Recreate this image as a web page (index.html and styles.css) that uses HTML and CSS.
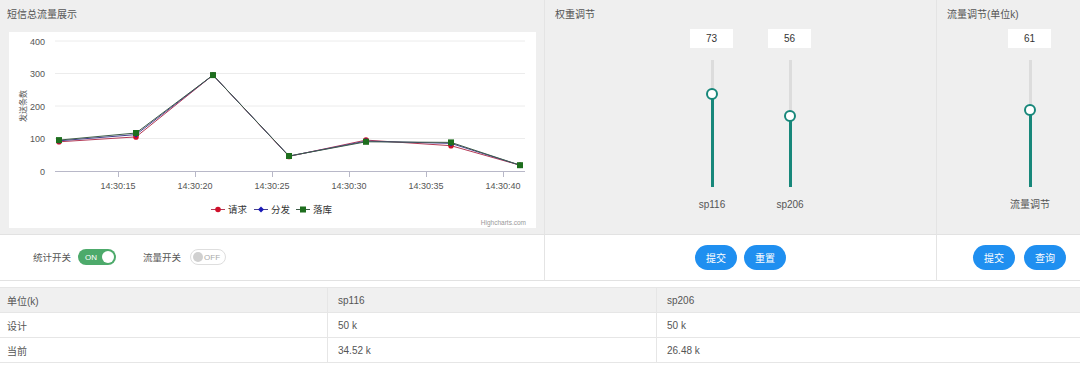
FILE: index.html
```html
<!DOCTYPE html>
<html lang="zh-CN">
<head>
  <meta charset="UTF-8" />
  <title>流量监控</title>
  <link rel="stylesheet" href="styles.css">
</head>
<body>
  <div class="dashboard">
    <!-- 总流量图表 -->
    <div class="panel">
      <div class="panel-title">短信总流量展示</div>
      <div class="chart-box">
        <svg width="527" height="196" viewBox="0 0 527 196">
          <g class="grid">
            <line x1="46" y1="9" x2="516" y2="9" />
            <line x1="46" y1="41.5" x2="516" y2="41.5" />
            <line x1="46" y1="74" x2="516" y2="74" />
            <line x1="46" y1="106.5" x2="516" y2="106.5" />
          </g>
          <line class="axis" x1="46" y1="139.5" x2="516" y2="139.5" />
          <g class="axis">
            <line x1="109.5" y1="139" x2="109.5" y2="145" />
            <line x1="186.5" y1="139" x2="186.5" y2="145" />
            <line x1="263.5" y1="139" x2="263.5" y2="145" />
            <line x1="340.5" y1="139" x2="340.5" y2="145" />
            <line x1="417.5" y1="139" x2="417.5" y2="145" />
            <line x1="494.5" y1="139" x2="494.5" y2="145" />
          </g>
          <g class="ylabels">
            <text x="36" y="13">400</text>
            <text x="36" y="45">300</text>
            <text x="36" y="78">200</text>
            <text x="36" y="110">100</text>
            <text x="36" y="143">0</text>
          </g>
          <g class="xlabels">
            <text x="109" y="157">14:30:15</text>
            <text x="186" y="157">14:30:20</text>
            <text x="263" y="157">14:30:25</text>
            <text x="340" y="157">14:30:30</text>
            <text x="417" y="157">14:30:35</text>
            <text x="494" y="157">14:30:40</text>
          </g>
          <text class="ytitle" transform="translate(17 74) rotate(-90)">发送条数</text>

          <!-- 请求 -->
          <polyline class="s-red" points="50,109.8 127,104.9 204,43.1 280,124.4 357,108.1 442,113.7 511,133.2" />
          <g class="m-red">
            <circle cx="50" cy="109.8" r="2.8" /><circle cx="127" cy="104.9" r="2.8" />
            <circle cx="204" cy="43.1" r="2.8" /><circle cx="280" cy="124.4" r="2.8" />
            <circle cx="357" cy="108.1" r="2.8" /><circle cx="442" cy="113.7" r="2.8" />
            <circle cx="511" cy="133.2" r="2.8" />
          </g>
          <!-- 分发 -->
          <polyline class="s-blue" points="50,108.8 127,102.6 204,43.1 280,124.1 357,109.1 442,111.4 511,133.2" />
          <g class="m-blue">
            <path d="M50 105.8l3 3-3 3-3-3z" /><path d="M127 99.6l3 3-3 3-3-3z" />
            <path d="M204 40.1l3 3-3 3-3-3z" /><path d="M280 121.1l3 3-3 3-3-3z" />
            <path d="M357 106.1l3 3-3 3-3-3z" /><path d="M442 108.4l3 3-3 3-3-3z" />
            <path d="M511 130.2l3 3-3 3-3-3z" />
          </g>
          <!-- 落库 -->
          <polyline class="s-green" points="50,108.1 127,101 204,43.1 280,124 357,109.8 442,110.4 511,133.2" />
          <g class="m-green">
            <rect x="47" y="105.1" width="6" height="6" /><rect x="124" y="98" width="6" height="6" />
            <rect x="201" y="40.1" width="6" height="6" /><rect x="277" y="121" width="6" height="6" />
            <rect x="354" y="106.8" width="6" height="6" /><rect x="439" y="107.4" width="6" height="6" />
            <rect x="508" y="130.2" width="6" height="6" />
          </g>

          <!-- 图例 -->
          <g class="legend">
            <line class="s-red" x1="202" y1="177.5" x2="216" y2="177.5" />
            <circle class="m-red" cx="209" cy="177.5" r="2.8" />
            <text x="219" y="181">请求</text>
            <line class="s-blue" x1="245" y1="177.5" x2="259" y2="177.5" />
            <path class="m-blue" d="M252 174.5l3 3-3 3-3-3z" />
            <text x="262" y="181">分发</text>
            <line class="s-green" x1="287" y1="177.5" x2="301" y2="177.5" />
            <rect class="m-green" x="291" y="174.5" width="6" height="6" />
            <text x="304" y="181">落库</text>
          </g>
          <text class="credit" x="517" y="193">Highcharts.com</text>
        </svg>
      </div>
    </div>

    <!-- 权重调节 -->
    <div class="panel bordered">
      <div class="panel-title">权重调节</div>
      <div class="sliders weight">
        <div class="slider">
          <div class="value">73</div>
          <div class="track">
            <div class="fill" style="height: 73%"></div>
            <div class="knob" style="bottom: 73%"></div>
          </div>
          <div class="slider-label">sp116</div>
        </div>
        <div class="slider">
          <div class="value">56</div>
          <div class="track">
            <div class="fill" style="height: 56%"></div>
            <div class="knob" style="bottom: 56%"></div>
          </div>
          <div class="slider-label">sp206</div>
        </div>
      </div>
    </div>

    <!-- 流量调节 -->
    <div class="panel bordered">
      <div class="panel-title">流量调节(单位k)</div>
      <div class="sliders flow">
        <div class="slider">
          <div class="value">61</div>
          <div class="track">
            <div class="fill" style="height: 61%"></div>
            <div class="knob" style="bottom: 61%"></div>
          </div>
          <div class="slider-label">流量调节</div>
        </div>
      </div>
    </div>

    <!-- 操作栏 -->
    <div class="foot switches">
      <span class="switch-label">统计开关</span>
      <span class="switch on"><span class="switch-text">ON</span><span class="switch-dot"></span></span>
      <span class="switch-label second">流量开关</span>
      <span class="switch off"><span class="switch-dot"></span><span class="switch-text">OFF</span></span>
    </div>
    <div class="foot bordered center">
      <button class="btn">提交</button>
      <button class="btn">重置</button>
    </div>
    <div class="foot bordered right">
      <button class="btn">提交</button>
      <button class="btn">查询</button>
    </div>
  </div>

  <table class="stats">
    <tr>
      <th class="c1">单位(k)</th>
      <th class="c2">sp116</th>
      <th>sp206</th>
    </tr>
    <tr>
      <td>设计</td>
      <td>50 k</td>
      <td>50 k</td>
    </tr>
    <tr>
      <td>当前</td>
      <td>34.52 k</td>
      <td>26.48 k</td>
    </tr>
  </table>
</body>
</html>
```

FILE: styles.css
```css
body {
  margin: 0;
  font-family: 'Liberation Sans', 'Noto Sans CJK SC', sans-serif;
  font-size: 10px;
  color: #555;
  background-color: #fff;
}
.dashboard {
  display: grid;
  grid-template-columns: 544px 392px 1fr;
  grid-template-rows: 235px 46px;
}
.bordered {
  border-left: 1px solid #e4e4e4;
}
.panel {
  background-color: #efefef;
  border-bottom: 1px solid #e2e2e2;
  padding-top: 8px;
  box-sizing: border-box;
}
.panel-title {
  line-height: 14px;
  padding-left: 7px;
  color: #555;
}
.panel.bordered .panel-title {
  padding-left: 10px;
}
.chart-box {
  width: 527px;
  height: 196px;
  margin: 10px 0 0 9px;
  background-color: #fff;
}
.chart-box svg {
  display: block;
}
.grid line {
  stroke: #ececec;
  stroke-width: 1;
}
.axis {
  stroke: #b8b8c8;
  stroke-width: 1;
}
.ylabels text {
  font-size: 9px;
  fill: #555;
  text-anchor: end;
}
.xlabels text {
  font-size: 9px;
  fill: #555;
  text-anchor: middle;
}
.ytitle {
  font-size: 8px;
  fill: #555;
  text-anchor: middle;
}
polyline, .legend line {
  fill: none;
  stroke-width: 1;
}
.s-red { stroke: #b43a56; }
.s-blue { stroke: #46408e; }
.s-green { stroke: #3d5c48; }
.m-red { fill: #d0102a; }
.m-blue { fill: #1a1ab8; }
.m-green { fill: #1e6e1e; }
.legend text {
  font-size: 9.5px;
  fill: #333;
}
.credit {
  font-size: 6.5px;
  fill: #999;
  text-anchor: end;
}
.sliders {
  display: flex;
  margin-top: 7px;
}
.sliders.weight {
  padding-left: 128px;
}
.sliders.flow {
  padding-left: 54px;
}
.slider {
  width: 78px;
  display: flex;
  flex-direction: column;
  align-items: center;
}
.value {
  width: 43px;
  height: 19px;
  line-height: 19px;
  background-color: #fff;
  text-align: center;
  color: #333;
  font-size: 10px;
  margin-left: -1px;
}
.track {
  position: relative;
  width: 3px;
  height: 127px;
  margin-top: 12px;
  background-color: #dcdcdc;
}
.fill {
  position: absolute;
  left: 0;
  bottom: 0;
  width: 3px;
  background-color: #17877a;
}
.knob {
  position: absolute;
  left: 50%;
  width: 8px;
  height: 8px;
  margin-left: -6px;
  margin-bottom: -6px;
  border: 2px solid #17877a;
  border-radius: 50%;
  background-color: #fff;
}
.slider-label {
  margin-top: 12px;
  line-height: 12px;
  color: #555;
}
.foot {
  display: flex;
  align-items: center;
  border-bottom: 1px solid #e2e2e2;
  box-sizing: border-box;
}
.foot.center {
  justify-content: center;
  gap: 7px;
}
.foot.right {
  justify-content: flex-end;
  gap: 9px;
  padding-right: 14px;
}
.switches {
  padding-left: 33px;
  padding-bottom: 1px;
}
.switch-label {
  color: #555;
  font-size: 9.5px;
}
.switch-label.second {
  margin-left: 27px;
}
.switch {
  display: inline-flex;
  align-items: center;
  box-sizing: border-box;
  height: 16px;
  border-radius: 8px;
  font-size: 8px;
}
.switch.on {
  width: 38px;
  margin-left: 7px;
  padding: 0 2px 0 7px;
  justify-content: space-between;
  background-color: #4daa6b;
  color: #fff;
}
.switch.on .switch-dot {
  width: 12px;
  height: 12px;
  border-radius: 50%;
  background-color: #fff;
}
.switch.off {
  width: 36px;
  margin-left: 9px;
  padding: 0 5px 0 2px;
  justify-content: space-between;
  border: 1px solid #dedede;
  background-color: #fff;
  color: #aaa;
}
.switch.off .switch-dot {
  width: 10px;
  height: 10px;
  border-radius: 50%;
  background-color: #d0d0d0;
}
.btn {
  width: 42px;
  height: 25px;
  padding: 0;
  border: none;
  border-radius: 13px;
  background-color: #1f8ff0;
  color: #fff;
  font-family: 'Liberation Sans', 'Noto Sans CJK SC', sans-serif;
  font-size: 10px;
  cursor: pointer;
}
.stats {
  width: 100%;
  margin-top: 6px;
  border-collapse: collapse;
}
.stats th, .stats td {
  height: 24px;
  padding: 0 0 0 7px;
  text-align: left;
  font-weight: normal;
  color: #555;
  border-top: 1px solid #e6e6e6;
  border-bottom: 1px solid #e6e6e6;
}
.stats th {
  background-color: #f0f0f0;
}
.stats th + th, .stats td + td {
  border-left: 1px solid #e6e6e6;
  padding-left: 10px;
}
.stats .c1 {
  width: 320px;
}
.stats .c2 {
  width: 318px;
}
```
